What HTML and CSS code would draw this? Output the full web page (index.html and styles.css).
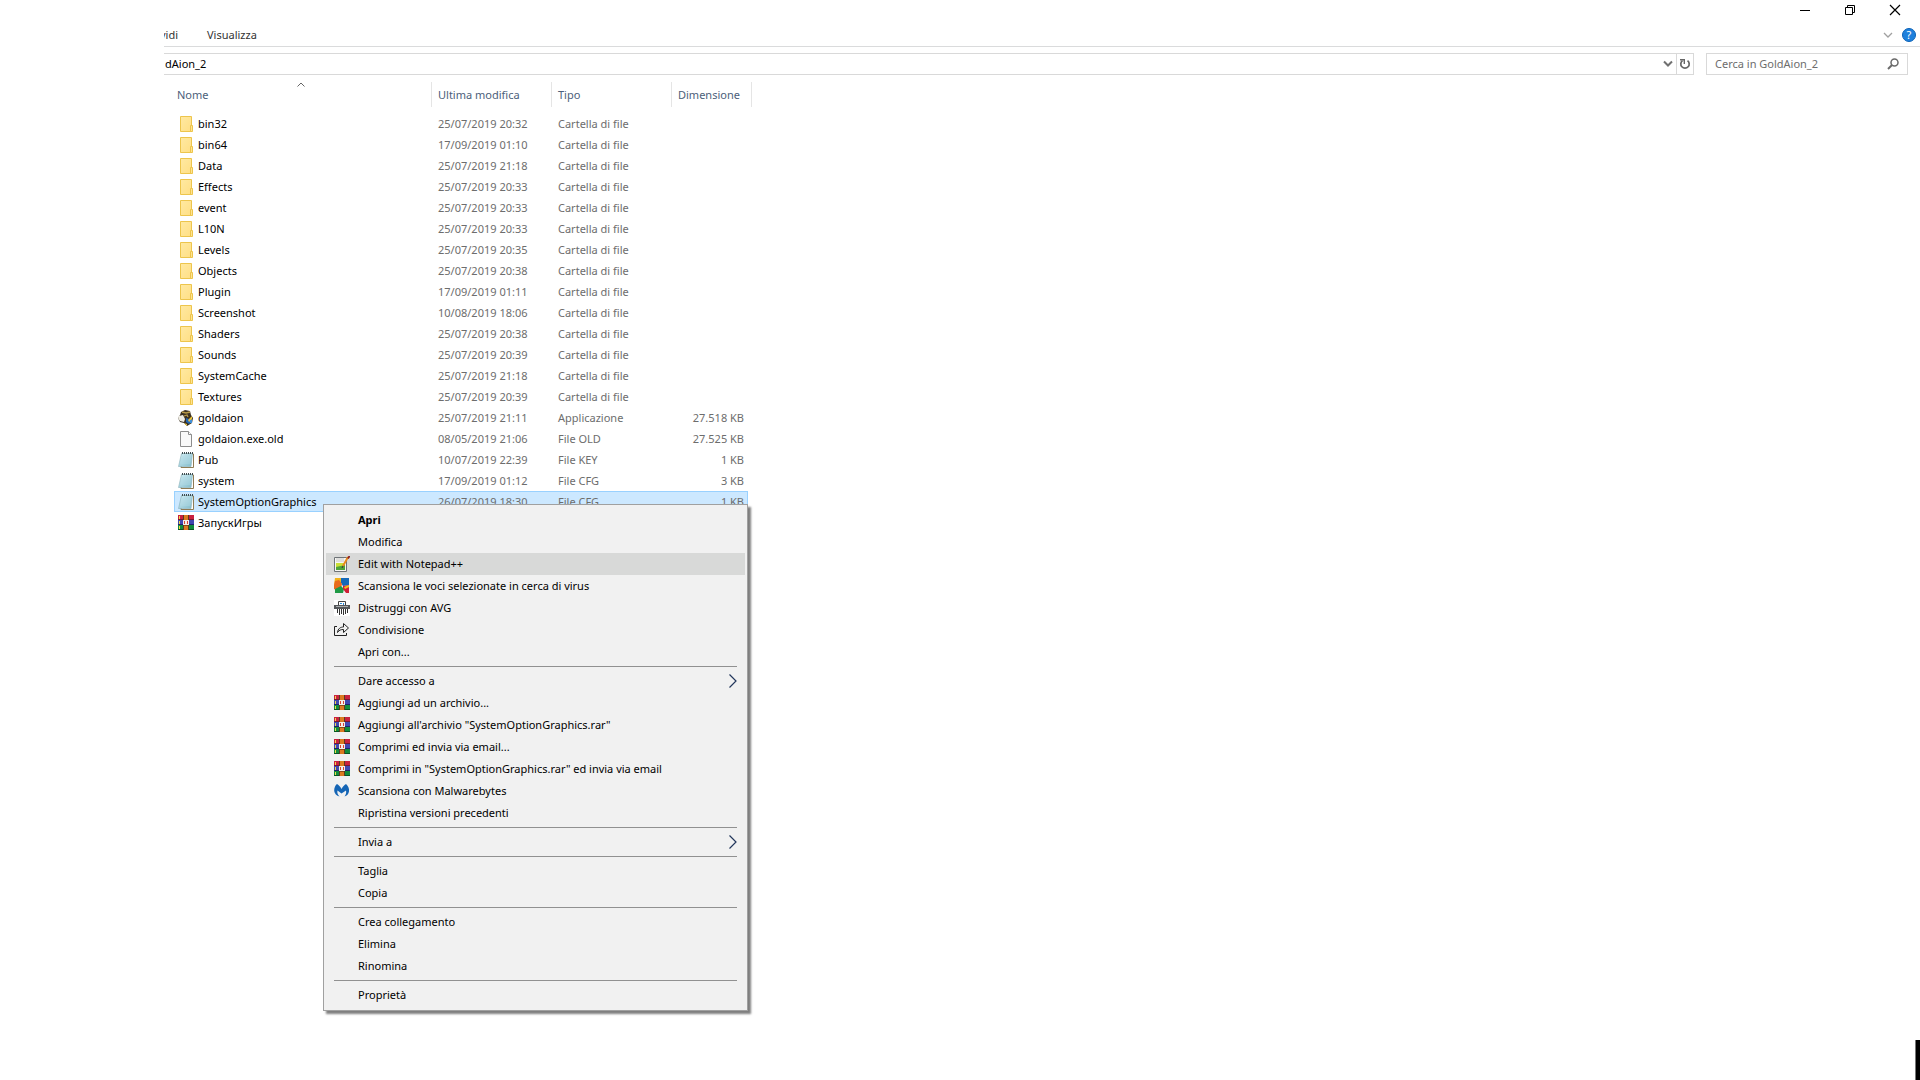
FILE: index.html
```html
<!DOCTYPE html>
<html lang="it">
<head>
<meta charset="utf-8">
<title>GoldAion_2</title>
<link rel="stylesheet" href="styles.css">
</head>
<body>
<svg class="sprite" aria-hidden="true">
  <defs>
    <linearGradient id="fold" x1="0" y1="0" x2="1" y2="1"><stop offset="0" stop-color="#ffe9a2"/><stop offset="1" stop-color="#ffdf85"/></linearGradient>
    <linearGradient id="note" x1="0" y1="0" x2="1" y2="1"><stop offset="0" stop-color="#d3eef5"/><stop offset="1" stop-color="#82bccb"/></linearGradient>
    <symbol id="i-folder" viewBox="0 0 16 16">
      <path d="M2.500.500h11v15h-11z" fill="url(#fold)" stroke="#edc54c"/>
      <path d="M12.500 9.500h2v6h-2z" fill="#ffe391" stroke="#edc54c"/>
    </symbol>
    <symbol id="i-file" viewBox="0 0 16 16">
      <path d="M2.500.500h8l3 3v12h-11z" fill="#f9f9f9" stroke="#8d8d8d"/>
      <path d="M10.500.500v3h3" fill="#fff" stroke="#8d8d8d"/>
    </symbol>
    <symbol id="i-notepad" viewBox="0 0 16 16">
      <path d="M4 2h11.500v13.500H3z" fill="#fff" stroke="#8f7c55"/>
      <path d="M3.500 1.500h11L13 14.500H.500z" fill="url(#note)" stroke="#86aeb9" stroke-width=".6"/>
      <path d="M4 5h9M3.500 7h9M3 9h9.500M2.500 11h9.500" stroke="#b4dbe5" stroke-width=".7"/>
      <path d="M4 1h11" stroke="#3f4c50" stroke-width="2" stroke-dasharray="1 1"/>
    </symbol>
    <symbol id="i-game" viewBox="0 0 16 16">
      <path d="M3 2 7 0l5 1 1 4 2 3-1 5-5 3-3-3-4-1-2-4 2-3z" fill="#3b3020"/>
      <path d="M1 6l4-1 2 4-1 3-4-1-2-3z" fill="#eeece4"/>
      <path d="M4 2l4 1 4-1M6 6l3-1 1 2" stroke="#b89a48" stroke-width="1.300" fill="none"/>
      <path d="M8 8l3 1 3-1v4l-3 2-3-2z" fill="#1f63b5"/>
      <path d="M10 10l4-4v3l-3 3zM6 13l3 1v2z" fill="#e8c238"/>
      <path d="M12 10h2v3h-2z" fill="#3f8fd8"/>
    </symbol>
    <symbol id="i-rar" viewBox="0 0 16 16">
      <path d="M0 0h16v5H0z" fill="#c9213f"/><path d="M0 5h16v5H0z" fill="#4048b0"/><path d="M0 10h16v5H0z" fill="#128c3c"/>
      <path d="M0 4h16v1H0z" fill="#7b1530"/><path d="M0 9h16v1H0z" fill="#20206c"/><path d="M0 14h16v1H0z" fill="#0a5523"/>
      <path d="M1 1h1v3H1zM1 6h1v3H1zM1 11h1v3H1z" fill="#f0d84a"/>
      <path d="M5 0h1v15H5zM10 0h1v15h-1z" fill="#5a3a20"/>
      <path d="M6 0h4v15H6z" fill="#dc7a20"/>
      <path d="M5 5h6v5H5z" fill="#f4eee8"/><path d="M6 6h1v3H6zM9 6h1v3H9z" fill="#d84236"/><path d="M6 10h4v1H6z" fill="#8a4a18"/>
    </symbol>
    <symbol id="i-npp" viewBox="0 0 16 16">
      <path d="M.500 1.500h12v14H.500z" fill="#f6f6f2" stroke="#6f7478"/>
      <path d="M2 3h8M2 5h8" stroke="#c6c6c6"/>
      <path d="M2 7h9v7H2z" fill="#c9df35"/><path d="M2 11l9-2v5H2z" fill="#4fa33a"/>
      <path d="M14 1 9 10" stroke="#e88a1e" stroke-width="2"/><path d="M15.500 0 14 2.500" stroke="#8d1f1f" stroke-width="1.800"/><path d="M9 10l-1 2" stroke="#333"/>
    </symbol>
    <symbol id="i-avg" viewBox="0 0 16 16">
      <path d="M1 0h6l1 5-4 3-4-1z" fill="#f3b41c"/><path d="M7 0h8v7l-6 1-2-3z" fill="#1569b8"/>
      <path d="M0 7l1-4 4-1 3 4-1 4-5 2-2-1z" fill="#e86a1c"/><path d="M1 11l6-3 3 3-1 4H1z" fill="#1f9a46"/>
      <path d="M9 8l6-1v8h-3l-3-4z" fill="#cf1f37"/><path d="M10 9l5-2v2l-4 2z" fill="#f3c21c"/>
    </symbol>
    <symbol id="i-shred" viewBox="0 0 16 16">
      <path d="M0 0h16v16H0z" fill="#fff"/>
      <path d="M4.500 6V1.500h7V6" fill="#fff" stroke="#444"/><path d="M6 3h2v1H6zM9 3h1v2H9z" fill="#2c8ad8"/>
      <path d="M0 5h16v4H0z" fill="#54575a"/><path d="M2 6h12v1H2z" fill="#a9acae"/>
      <path d="M3.500 9v4M5.500 9v6M7.500 9v5M9.500 9v6M11.500 9v5M13.500 9v4" stroke="#333"/>
    </symbol>
    <symbol id="i-share" viewBox="0 0 16 16">
      <path d="M3 4.500H.500v9h12V11M3.500 10.500c.500-4 3-5.500 6-5.500V1.500l5 4.500-5 4.500V7.500c-2.500 0-4.500.500-6 3z" fill="none" stroke="#222"/>
    </symbol>
    <symbol id="i-mwb" viewBox="0 0 16 16">
      <path d="M3 1c2 1 3.500 3 4.500 5C8.500 4 10 2 12 1c2 2 3.500 4 3 7.500-.500 2.500-2 4.500-4.500 5 1.500-2 2-4 1.500-6L7.500 10.500 3.500 7.500C3 9.500 3.500 11.500 5.500 13.500c-3-.500-5-3-5.300-5.500C0 5 1.500 2 3 1z" fill="#1565b5"/>
    </symbol>
    <symbol id="i-arrow" viewBox="0 0 8 14"><path d="M.500.500 7 7 .500 13.500" fill="none" stroke="#23375c" stroke-width="1.200"/></symbol>
  </defs>
</svg>

<header class="titlebar">
  <button class="win" aria-label="Riduci a icona"><svg width="12" height="12"><path d="M1 6.500h10" stroke="#000"/></svg></button>
  <button class="win" aria-label="Ripristina"><svg width="12" height="12"><path d="M1.500 3.500h7v7h-7zM3.500 3V1.500h7v7H9" fill="none" stroke="#000"/></svg></button>
  <button class="win" aria-label="Chiudi"><svg width="12" height="12"><path d="M1 1l10 10M11 1 1 11" stroke="#000" stroke-width="1.200"/></svg></button>
</header>

<nav class="ribbon">
  <button class="tab tab-cut">vidi</button>
  <button class="tab">Visualizza</button>
  <span class="spacer"></span>
  <button class="expand" aria-label="Espandi"><svg width="10" height="6"><path d="M1 1l4 4 4-4" fill="none" stroke="#a0a0a0" stroke-width="1.300"/></svg></button>
  <button class="help" aria-label="Guida">?</button>
</nav>

<div class="toolbar">
  <div class="address">
    <input class="path" aria-label="Indirizzo" value="dAion_2">
    <button class="tool" aria-label="Percorsi recenti"><svg width="10" height="8"><path d="M1 1.500 5 5.500 9 1.500" fill="none" stroke="#707070" stroke-width="2"/></svg></button>
    <button class="tool refresh" aria-label="Aggiorna"><svg width="12" height="12"><path d="M8.500 2.600A4.200 4.200 0 1 1 3.500 2.600" fill="none" stroke="#666" stroke-width="1.700"/><path d="M1 1.700h4.300V6" fill="none" stroke="#666" stroke-width="1.400"/></svg></button>
  </div>
  <div class="search">
    <input class="query" aria-label="Cerca" placeholder="Cerca in GoldAion_2">
    <button class="tool" aria-label="Avvia ricerca"><svg width="12" height="12"><circle cx="7.500" cy="4.500" r="3.500" fill="none" stroke="#6a6a6a" stroke-width="1.500"/><path d="M5 7 1 11" stroke="#6a6a6a" stroke-width="2"/></svg></button>
  </div>
</div>

<main class="files">
  <table class="list">
    <colgroup><col class="c-name"><col class="c-date"><col class="c-type"><col class="c-size"><col class="c-edge"></colgroup>
    <thead>
      <tr>
        <th>Nome<svg class="sort" width="8" height="5"><path d="M.500 4.500 4 1l3.500 3.500" fill="none" stroke="#666"/></svg></th>
        <th>Ultima modifica</th><th>Tipo</th><th colspan="2">Dimensione</th>
      </tr>
    </thead>
    <tbody>
      <tr><td><span class="name"><svg class="ico"><use href="#i-folder"/></svg>bin32</span></td><td>25/07/2019 20:32</td><td>Cartella di file</td><td></td></tr>
      <tr><td><span class="name"><svg class="ico"><use href="#i-folder"/></svg>bin64</span></td><td>17/09/2019 01:10</td><td>Cartella di file</td><td></td></tr>
      <tr><td><span class="name"><svg class="ico"><use href="#i-folder"/></svg>Data</span></td><td>25/07/2019 21:18</td><td>Cartella di file</td><td></td></tr>
      <tr><td><span class="name"><svg class="ico"><use href="#i-folder"/></svg>Effects</span></td><td>25/07/2019 20:33</td><td>Cartella di file</td><td></td></tr>
      <tr><td><span class="name"><svg class="ico"><use href="#i-folder"/></svg>event</span></td><td>25/07/2019 20:33</td><td>Cartella di file</td><td></td></tr>
      <tr><td><span class="name"><svg class="ico"><use href="#i-folder"/></svg>L10N</span></td><td>25/07/2019 20:33</td><td>Cartella di file</td><td></td></tr>
      <tr><td><span class="name"><svg class="ico"><use href="#i-folder"/></svg>Levels</span></td><td>25/07/2019 20:35</td><td>Cartella di file</td><td></td></tr>
      <tr><td><span class="name"><svg class="ico"><use href="#i-folder"/></svg>Objects</span></td><td>25/07/2019 20:38</td><td>Cartella di file</td><td></td></tr>
      <tr><td><span class="name"><svg class="ico"><use href="#i-folder"/></svg>Plugin</span></td><td>17/09/2019 01:11</td><td>Cartella di file</td><td></td></tr>
      <tr><td><span class="name"><svg class="ico"><use href="#i-folder"/></svg>Screenshot</span></td><td>10/08/2019 18:06</td><td>Cartella di file</td><td></td></tr>
      <tr><td><span class="name"><svg class="ico"><use href="#i-folder"/></svg>Shaders</span></td><td>25/07/2019 20:38</td><td>Cartella di file</td><td></td></tr>
      <tr><td><span class="name"><svg class="ico"><use href="#i-folder"/></svg>Sounds</span></td><td>25/07/2019 20:39</td><td>Cartella di file</td><td></td></tr>
      <tr><td><span class="name"><svg class="ico"><use href="#i-folder"/></svg>SystemCache</span></td><td>25/07/2019 21:18</td><td>Cartella di file</td><td></td></tr>
      <tr><td><span class="name"><svg class="ico"><use href="#i-folder"/></svg>Textures</span></td><td>25/07/2019 20:39</td><td>Cartella di file</td><td></td></tr>
      <tr><td><span class="name"><svg class="ico"><use href="#i-game"/></svg>goldaion</span></td><td>25/07/2019 21:11</td><td>Applicazione</td><td>27.518 KB</td></tr>
      <tr><td><span class="name"><svg class="ico"><use href="#i-file"/></svg>goldaion.exe.old</span></td><td>08/05/2019 21:06</td><td>File OLD</td><td>27.525 KB</td></tr>
      <tr><td><span class="name"><svg class="ico"><use href="#i-notepad"/></svg>Pub</span></td><td>10/07/2019 22:39</td><td>File KEY</td><td>1 KB</td></tr>
      <tr><td><span class="name"><svg class="ico"><use href="#i-notepad"/></svg>system</span></td><td>17/09/2019 01:12</td><td>File CFG</td><td>3 KB</td></tr>
      <tr class="selected"><td><span class="name"><svg class="ico"><use href="#i-notepad"/></svg>SystemOptionGraphics</span></td><td>26/07/2019 18:30</td><td>File CFG</td><td>1 KB</td></tr>
      <tr><td><span class="name"><svg class="ico"><use href="#i-rar"/></svg>ЗапускИгры</span></td><td></td><td></td><td></td></tr>
    </tbody>
  </table>

  <div class="menu" role="menu">
    <button class="item default" role="menuitem">Apri</button>
    <button class="item" role="menuitem">Modifica</button>
    <button class="item hover" role="menuitem"><svg class="ico"><use href="#i-npp"/></svg>Edit with Notepad++</button>
    <button class="item" role="menuitem"><svg class="ico"><use href="#i-avg"/></svg>Scansiona le voci selezionate in cerca di virus</button>
    <button class="item" role="menuitem"><svg class="ico"><use href="#i-shred"/></svg>Distruggi con AVG</button>
    <button class="item" role="menuitem"><svg class="ico"><use href="#i-share"/></svg>Condivisione</button>
    <button class="item" role="menuitem">Apri con...</button>
    <hr class="rule">
    <button class="item" role="menuitem">Dare accesso a<svg class="sub"><use href="#i-arrow"/></svg></button>
    <button class="item" role="menuitem"><svg class="ico"><use href="#i-rar"/></svg>Aggiungi ad un archivio...</button>
    <button class="item" role="menuitem"><svg class="ico"><use href="#i-rar"/></svg>Aggiungi all'archivio "SystemOptionGraphics.rar"</button>
    <button class="item" role="menuitem"><svg class="ico"><use href="#i-rar"/></svg>Comprimi ed invia via email...</button>
    <button class="item" role="menuitem"><svg class="ico"><use href="#i-rar"/></svg>Comprimi in "SystemOptionGraphics.rar" ed invia via email</button>
    <button class="item" role="menuitem"><svg class="ico"><use href="#i-mwb"/></svg>Scansiona con Malwarebytes</button>
    <button class="item" role="menuitem">Ripristina versioni precedenti</button>
    <hr class="rule">
    <button class="item" role="menuitem">Invia a<svg class="sub"><use href="#i-arrow"/></svg></button>
    <hr class="rule">
    <button class="item" role="menuitem">Taglia</button>
    <button class="item" role="menuitem">Copia</button>
    <hr class="rule">
    <button class="item" role="menuitem">Crea collegamento</button>
    <button class="item" role="menuitem">Elimina</button>
    <button class="item" role="menuitem">Rinomina</button>
    <hr class="rule">
    <button class="item" role="menuitem">Proprietà</button>
  </div>
</main>
<div class="corner"></div>
</body>
</html>
```
FILE: styles.css
```css
* { box-sizing: border-box; }

body {
  margin: 0;
  min-height: 100vh;
  background: #fff;
  color: #000;
  font: 11px/16px "Noto Sans", "Open Sans", sans-serif;
}

button, input {
  margin: 0;
  padding: 0;
  border: 0;
  background: none;
  color: inherit;
  font: inherit;
}

svg { display: block; flex: none; }
.sprite { position: absolute; width: 0; height: 0; }
.ico { width: 16px; height: 16px; }
.spacer { flex: 1; }

/* Title bar */
.titlebar {
  display: flex;
  justify-content: flex-end;
  height: 24px;
  padding: 0 3px 4px 0;
}
.win {
  display: flex;
  align-items: center;
  justify-content: center;
  width: 45px;
}

/* Ribbon tabs */
.ribbon {
  display: flex;
  align-items: center;
  gap: 9px;
  height: 23px;
  margin-left: 164px;
  padding-right: 4px;
  border-bottom: 1px solid #dadbdc;
}
.tab { padding: 0 20px; color: #333; }
.tab-cut {
  display: flex;
  justify-content: flex-end;
  width: 14px;
  padding: 0;
  overflow: hidden;
}
.help {
  width: 14px;
  height: 14px;
  border-radius: 50%;
  border: 1px solid #0a62b8;
  background: #1e80dc;
  color: #fff;
  line-height: 12px;
}

/* Address and search */
.toolbar {
  display: flex;
  gap: 12px;
  padding: 6px 12px 7px 164px;
}
.address, .search {
  display: flex;
  height: 22px;
  border: 1px solid #d9d9d9;
}
.address { flex: 1; border-left: 0; }
.search { width: 202px; }
.path { flex: 1; padding-left: 1px; }
.query { flex: 1; min-width: 0; padding-left: 8px; }
.query::placeholder { color: #6d6d6d; opacity: 1; }
.tool {
  display: flex;
  align-items: center;
  justify-content: center;
  width: 17px;
}
.search .tool { width: 28px; }
.refresh { border-left: 1px solid #d9d9d9; }

/* File list */
.files { position: relative; padding-left: 174px; }
.list {
  width: 578px;
  table-layout: fixed;
  border-collapse: separate;
  border-spacing: 0;
}
.c-name { width: 258px; }
.c-date, .c-type { width: 120px; }
.c-size { width: 76px; }
.c-edge { width: 4px; }
th {
  position: relative;
  height: 25px;
  padding: 0 0 0 6px;
  border-right: 1px solid #e5e5e5;
  color: #4c607a;
  font-weight: 400;
  text-align: left;
  white-space: nowrap;
}
th:first-child { padding-left: 3px; }
.sort { position: absolute; top: 0; left: 48%; }
thead::after { content: ""; display: block; height: 6px; }
td {
  height: 21px;
  padding: 0 0 0 6px;
  color: #6d6d6d;
  white-space: nowrap;
}
td:first-child { padding-left: 4px; color: #000; }
td:last-child { padding: 0 4px 0 0; text-align: right; }
.name { display: flex; align-items: center; gap: 4px; }
.selected td {
  background: #cce8ff;
  border: solid #99d1ff;
  border-width: 1px 0;
}
.selected td:first-child { border-left-width: 1px; padding-left: 3px; }
.selected td:last-child { border-right-width: 1px; padding-right: 3px; }

/* Context menu */
.menu {
  position: absolute;
  top: 422px;
  left: 323px;
  width: 425px;
  padding: 4px 2px;
  border: 1px solid #a0a0a0;
  background: #f1f1f1;
  box-shadow: 3px 3px 2px rgba(0, 0, 0, .5);
}
.item {
  display: flex;
  align-items: center;
  gap: 8px;
  width: 100%;
  height: 22px;
  padding: 0 8px;
  text-align: left;
}
.item:not(:has(.ico)) { padding-left: 32px; }
.default { font-weight: 700; }
.hover { background: #d8d9d8; }
.sub { width: 8px; height: 14px; margin-left: auto; }
.rule {
  height: 1px;
  margin: 3px 8px;
  border: 0;
  background: #919191;
}

/* Overlay strip at the screen edge */
.corner {
  position: fixed;
  right: 0;
  bottom: 0;
  width: 5px;
  height: 40px;
  border-left: 1px solid #777;
  background: #000;
}
```
